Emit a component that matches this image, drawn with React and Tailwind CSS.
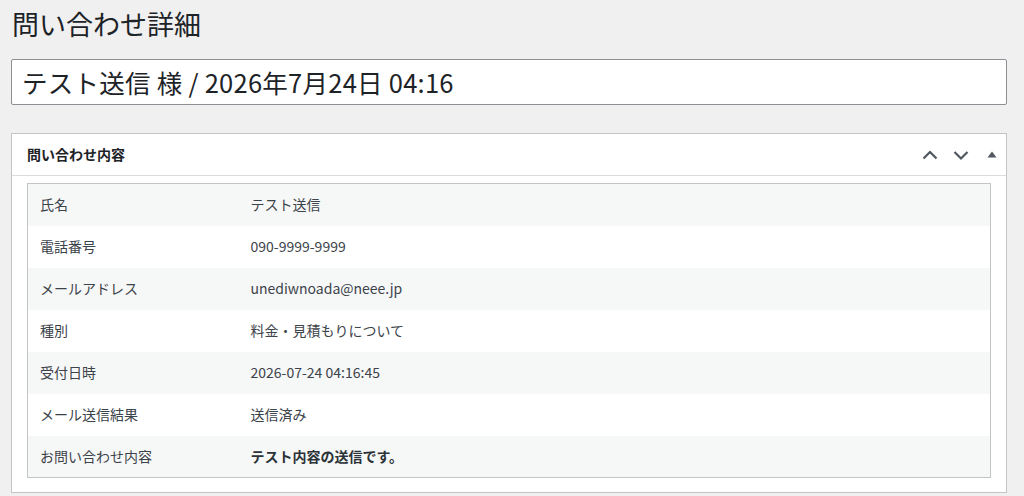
import React from 'react';

const rows = [
  ['氏名', 'テスト送信'],
  ['電話番号', '090-9999-9999'],
  ['メールアドレス', 'unediwnoada@neee.jp'],
  ['種別', '料金・見積もりについて'],
  ['受付日時', '2026-07-24 04:16:45'],
  ['メール送信結果', '送信済み'],
  ['お問い合わせ内容', 'テスト内容の送信です。', true],
];

const Chevron = ({ up }) => (
  <svg width="20" height="20" viewBox="0 0 20 20" className="text-[#50575e]">
    <path
      d={up ? 'M3.5 13.5 L10 7 L16.5 13.5' : 'M3.5 7 L10 13.5 L16.5 7'}
      fill="none"
      stroke="currentColor"
      strokeWidth="2.2"
    />
  </svg>
);

const App = () => {
  return (
    <div className="min-h-[496px] w-full bg-[#f0f0f1] pl-[11px] pr-[17px] pt-[6px] font-['Noto_Sans_CJK_JP',sans-serif] text-[#3c434a]">
      <h1 className="pl-[1px] text-[27px] font-normal leading-[36px] text-[#1d2327]">問い合わせ詳細</h1>

      <div className="mt-[17px] flex h-[46px] items-center rounded-[2px] border border-[#8c8f94] bg-white px-[10px] text-[25.5px] leading-none tracking-[0.01em] text-[#1d2327]">
        テスト送信 様 / 2026年7月24日 04:16
      </div>

      <div className="mt-[28px] border border-[#c3c4c7] bg-white">
        <div className="flex h-[42px] items-center justify-between border-b border-[#dcdcde] pl-[15px] pr-[4px]">
          <h2 className="text-[14px] font-bold text-[#1d2327]">問い合わせ内容</h2>
          <div className="flex items-center gap-[11px]">
            <Chevron up />
            <Chevron />
            <svg width="20" height="20" viewBox="0 0 20 20" className="text-[#50575e]">
              <path d="M5.5 12.5 L10 6.5 L14.5 12.5 Z" fill="currentColor" />
            </svg>
          </div>
        </div>
        <div className="px-[15px] pb-[14px] pt-[7px]">
          <table className="w-full border-collapse border border-[#c3c4c7] text-[14px]">
            <tbody>
              {rows.map(([label, value, strong], i) => (
                <tr key={label} className={i % 2 === 0 ? 'bg-[#f6f7f7]' : 'bg-white'}>
                  <td className="h-[42px] w-[211px] pl-[12px] align-middle">{label}</td>
                  <td className={`h-[42px] pl-[12px] align-middle ${strong ? 'font-semibold text-[#2c3338]' : ''}`}>
                    {value}
                  </td>
                </tr>
              ))}
            </tbody>
          </table>
        </div>
      </div>
    </div>
  );
};

export default App;
